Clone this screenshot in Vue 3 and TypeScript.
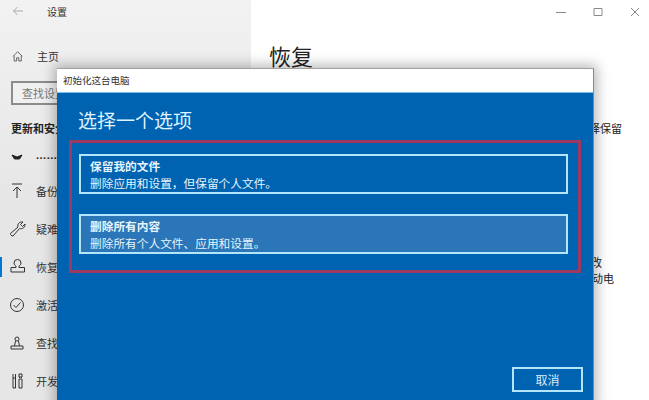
<script setup lang="ts">
interface NavItem { label: string; d: string; active?: boolean; dim?: boolean }
const nav: NavItem[] = [
  { label: '......', dim: true, d: 'M12 11l5 2 5-2-2.500 4h-5z' },
  { label: '备份', d: 'M12 7h10M17 21V10M13 14l4-4 4 4' },
  { label: '疑难解答', d: 'M12 21l-1.500-1.500 0-1 7.500-6.500c-1-3 1.500-5.500 5-5l-2.500 2.500 2 2L25 9c.500 3-2.500 5.500-5.500 4.500l-6.500 7.500z' },
  { label: '恢复', active: true, d: 'M14 10a3.500 3.500 0 0 1 7 0c0 1.500-1 2.500-2 3v1.500h5.500V19M11 14.500h5V13c-1-.5-2-1.500-2-3M11 14.500V19h13.500' },
  { label: '激活', d: 'M17 7.500a6.500 6.500 0 1 1 0 13 6.500 6.500 0 0 1 0-13zM13.500 14l2.500 2.500 4.500-5' },
  { label: '查找我的设备', d: 'M15 10a2 2 0 1 1 4 0 2 2 0 0 1-4 0zM15.500 12l-1 5M18.500 12l1 5M11 17h12v3H11z' },
  { label: '开发者选项', d: 'M13 7v4M15.500 7v4M13 11h2.500v10H13zM19 7h3v3h-3zM19.500 10v1M21.500 10v1M19 12h3v9h-3z' },
]
</script>

<template>
  <div class="screen">
    <aside class="sidebar">
      <div class="topbar">
        <svg class="back" width="12" height="12" viewBox="0 0 12 12"><path d="M11 6H1.500M5.500 2 1.500 6l4 4" /></svg>
        <span class="app-name">设置</span>
      </div>
      <div class="home">
        <svg class="icon" width="34" height="20" viewBox="0 0 34 28"><path d="M11.500 14.500 18 8l6.500 6.500M13 13.500V21h3.500v-4.500h3V21H23v-7.500" /></svg>
        <span>主页</span>
      </div>
      <div class="search">查找设置</div>
      <div class="section">更新和安全</div>
      <ul class="nav">
        <li v-for="item in nav" :key="item.label" :class="{ active: item.active, dim: item.dim }">
          <svg class="icon" width="34" height="28" viewBox="0 0 34 28"><path :d="item.d" /></svg>
          <span>{{ item.label }}</span>
        </li>
      </ul>
    </aside>

    <main class="content">
      <div class="winbar">
        <svg width="10" height="10" viewBox="0 0 10 10"><path d="M0 5.500h10" /></svg>
        <svg width="10" height="10" viewBox="0 0 10 10"><path d="M1 1.500h8v7H1z" /></svg>
        <svg width="10" height="10" viewBox="0 0 10 10"><path d="M1 1l8 8M9 1 1 9" /></svg>
      </div>
      <h1>恢复</h1>
      <p class="line keep">如果你需要选择保留</p>
      <p class="line change">请更改</p>
      <p class="line boot">重新启动电</p>
    </main>

    <section class="dialog">
      <header class="dialog-title">初始化这台电脑</header>
      <div class="dialog-body">
        <h2>选择一个选项</h2>
        <div class="options">
          <button class="option">
            <strong>保留我的文件</strong>
            <span>删除应用和设置，但保留个人文件。</span>
          </button>
          <button class="option hover">
            <strong>删除所有内容</strong>
            <span>删除所有个人文件、应用和设置。</span>
          </button>
        </div>
        <div class="actions">
          <button class="cancel">取消</button>
        </div>
      </div>
    </section>
  </div>
</template>

<style>
html, body { margin: 0; overflow: hidden; }
</style>

<style scoped>
.screen {
  position: relative;
  display: flex;
  width: 649px;
  height: 400px;
  overflow: hidden;
  background: #fff;
  color: #1a1a1a;
  font-family: "Noto Sans CJK SC", "Liberation Sans", sans-serif;
}
svg path { fill: none; stroke: currentColor; stroke-width: 1; }

.sidebar {
  flex: 0 0 251px;
  background: linear-gradient(#f2f2f2, #e6e6e6 200px);
  font-size: 11px;
  white-space: nowrap;
  overflow: hidden;
}
.topbar { display: flex; align-items: center; height: 22px; padding-left: 12px; }
.back { color: #aaa; }
.app-name { margin-left: 23px; font-size: 10px; color: #333; }
.home { display: flex; align-items: center; height: 20px; margin-top: 24px; color: #333; }
.home .icon { color: #333; }
.home span { margin-left: 3px; }
.search {
  box-sizing: border-box;
  width: 120px;
  height: 24px;
  margin: 15px 0 0 11px;
  padding-left: 9px;
  border: 2px solid #8c8c8c;
  background: #f0f0f0;
  color: #777;
  line-height: 20px;
}
.section { margin: 14px 0 0 11px; height: 18px; line-height: 18px; font-weight: 700; color: #222; }
.nav { list-style: none; margin: 7px 0 0; padding: 0; }
.nav li {
  position: relative;
  display: flex;
  align-items: center;
  height: 38px;
  color: #333;
}
.nav li span { margin-left: 2px; }
.nav li.dim { height: 28px; color: #222; }
.nav li.dim path { fill: currentColor; }
.nav li.dim span {
  margin-bottom: 6px;
  font-family: "Liberation Sans", sans-serif;
  font-weight: 700;
  letter-spacing: 0.5px;
}
.nav li.active::before {
  content: "";
  position: absolute;
  left: 0;
  top: 9px;
  width: 2px;
  height: 20px;
  background: #0078d4;
}

.content { position: relative; flex: 1; min-width: 0; padding-left: 18px; font-size: 11px; }
.winbar { display: flex; justify-content: flex-end; gap: 27px; padding: 7px 9px 0 0; color: #888; height: 20px; }
h1 { margin: 12px 0 0; font-size: 22px; font-weight: 400; line-height: 32px; color: #222; }
.line { margin: 0; text-align: right; white-space: nowrap; line-height: 16px; color: #222; }
.keep { margin-top: 49px; padding-right: 27px; }
.change { margin-top: 118px; padding-right: 47px; }
.boot { padding-right: 35px; }

.dialog {
  position: absolute;
  left: 57px;
  top: 68px;
  display: flex;
  flex-direction: column;
  box-sizing: border-box;
  width: 537px;
  height: 340px;
  border-top: 1px solid #a0a0a0;
  border-right: 1px solid #8a8a8a;
  background: #0063b1;
  box-shadow: 0 0 12px 3px rgba(0, 0, 0, 0.28);
}
.dialog-title {
  flex: 0 0 23px;
  padding-left: 6px;
  background: #fff;
  color: #333;
  font-size: 9.500px;
  line-height: 23px;
  border-bottom: 1px solid #7cc0ea;
}
.dialog-body { flex: 1; display: flex; flex-direction: column; padding: 0 10px 0 21px; color: #fff; }
h2 { margin: 14px 0 0; font-size: 19px; font-weight: 400; line-height: 26px; color: #dff2ff; }
.options {
  display: flex;
  flex-direction: column;
  gap: 20px;
  box-sizing: border-box;
  width: 512px;
  height: 133px;
  margin: 7px 0 0 -9px;
  padding: 11px 7px;
  border: 3px solid #9c3a62;
}
.option {
  display: flex;
  flex-direction: column;
  justify-content: center;
  box-sizing: border-box;
  width: 489px;
  height: 40px;
  padding: 0 0 0 9px;
  border: 2px solid #b4e6fb;
  background: transparent;
  color: #e6f4fc;
  font: inherit;
  font-size: 11.700px;
  line-height: 17px;
  text-align: left;
}
.option strong { font-weight: 700; }
.option.hover { background: #2a76b8; }
.actions { display: flex; justify-content: flex-end; margin-top: 94px; }
.cancel {
  box-sizing: border-box;
  width: 71px;
  height: 25px;
  padding: 0;
  border: 2px solid #b4e6fb;
  background: transparent;
  color: #d8eefb;
  font: inherit;
  font-size: 12px;
}
</style>
